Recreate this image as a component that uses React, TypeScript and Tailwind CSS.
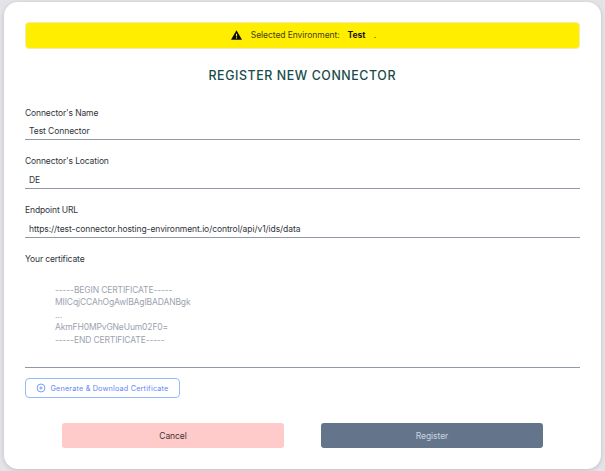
import React from "react";

function WarningIcon() {
  return (
    <svg viewBox="0 0 24 21" className="h-[10px] w-[11px]">
      <path d="M12 0 24 21H0Z" fill="#0b0b08" />
      <path d="M10.8 8h2.4v5.5h-2.4zM10.8 15.5h2.4v2.4h-2.4z" fill="#ffee00" />
    </svg>
  );
}

function PlusCircleIcon() {
  return (
    <svg viewBox="0 0 24 24" className="h-[10px] w-[10px]" fill="none" stroke="#5b8df6" strokeWidth="2">
      <circle cx="12" cy="12" r="9.5" />
      <path d="M12 8v8M8 12h8" />
    </svg>
  );
}

function Field({ label, value }: { label: string; value: string }) {
  return (
    <div className="h-[48.8px]">
      <div className="h-[14px] leading-[14px] tracking-[-0.12px]">{label}</div>
      <div className="mt-[3px] h-[17.8px] border-b border-[#9199a6] pt-[1.6px] pl-[4px] leading-[14px]">
        {value}
      </div>
    </div>
  );
}

const certificate = [
  "-----BEGIN CERTIFICATE-----",
  "MIICqjCCAhOgAwIBAgIBADANBgk",
  "...",
  "AkmFH0MPvGNeUum02F0=",
  "-----END CERTIFICATE-----",
];

export default function App() {
  return (
    <div className="h-[471px] w-[605px] overflow-hidden bg-[#e3e3e8] pt-[1.5px] pl-[4px] font-['Inter',sans-serif] text-[8.5px] tracking-[-0.07px] text-[#30343b]">
      <main className="h-[467px] w-[596.5px] rounded-[14px] bg-white px-[21px] pt-[20.5px] shadow-[0_1px_4px_rgba(0,0,0,0.16)]">
        <div className="flex h-[26.5px] w-[555px] items-center justify-center rounded-[4px] border border-[#f3ecb0] bg-[#ffee00] pl-[2px] text-[#45410b]">
          <WarningIcon />
          <span className="ml-[9px]">Selected Environment:</span>
          <span className="ml-[8px] font-bold text-[#16160a]">Test</span>
          <span className="ml-[8.5px]">.</span>
        </div>
        <h1 className="mt-[17.5px] h-[20px] text-center text-[12.4px] leading-[20px] font-medium tracking-[0.58px] text-[#184b4b]">
          REGISTER NEW CONNECTOR
        </h1>
        <form className="mt-[19.6px] w-[555px]">
          <Field label="Connector's Name" value="Test Connector" />
          <Field label="Connector's Location" value="DE" />
          <Field label="Endpoint URL" value="https://test-connector.hosting-environment.io/control/api/v1/ids/data" />
          <div className="h-[14px] leading-[14px] tracking-[-0.12px]">Your certificate</div>
          <div className="h-[102px] border-b border-[#9199a6] pt-[18px] pl-[30px] leading-[12.4px] tracking-[-0.13px] text-[#9ca3af] [font-feature-settings:'calt'_0]">
            {certificate.map((line) => (
              <div key={line}>{line}</div>
            ))}
          </div>
          <button type="button" className="mt-[10.5px] flex h-[20px] w-[155px] items-center rounded-[4px] border border-[#93bbfb] pl-[10px] text-[7.25px] tracking-[0.18px] text-[#6686f5]">
            <PlusCircleIcon />
            <span className="ml-[4.5px] pt-[1px] whitespace-nowrap">Generate &amp; Download Certificate</span>
          </button>
          <div className="mt-[24.7px] flex gap-[37px] pl-[37px]">
            <button type="button" className="h-[25px] w-[222px] rounded-[3px] bg-[#fecaca] pt-[1px] text-[#443237]">Cancel</button>
            <button type="button" className="h-[25px] w-[222px] rounded-[3px] bg-[#64748b] pt-[1px] text-[#cbd5e1]">Register</button>
          </div>
        </form>
      </main>
    </div>
  );
}
